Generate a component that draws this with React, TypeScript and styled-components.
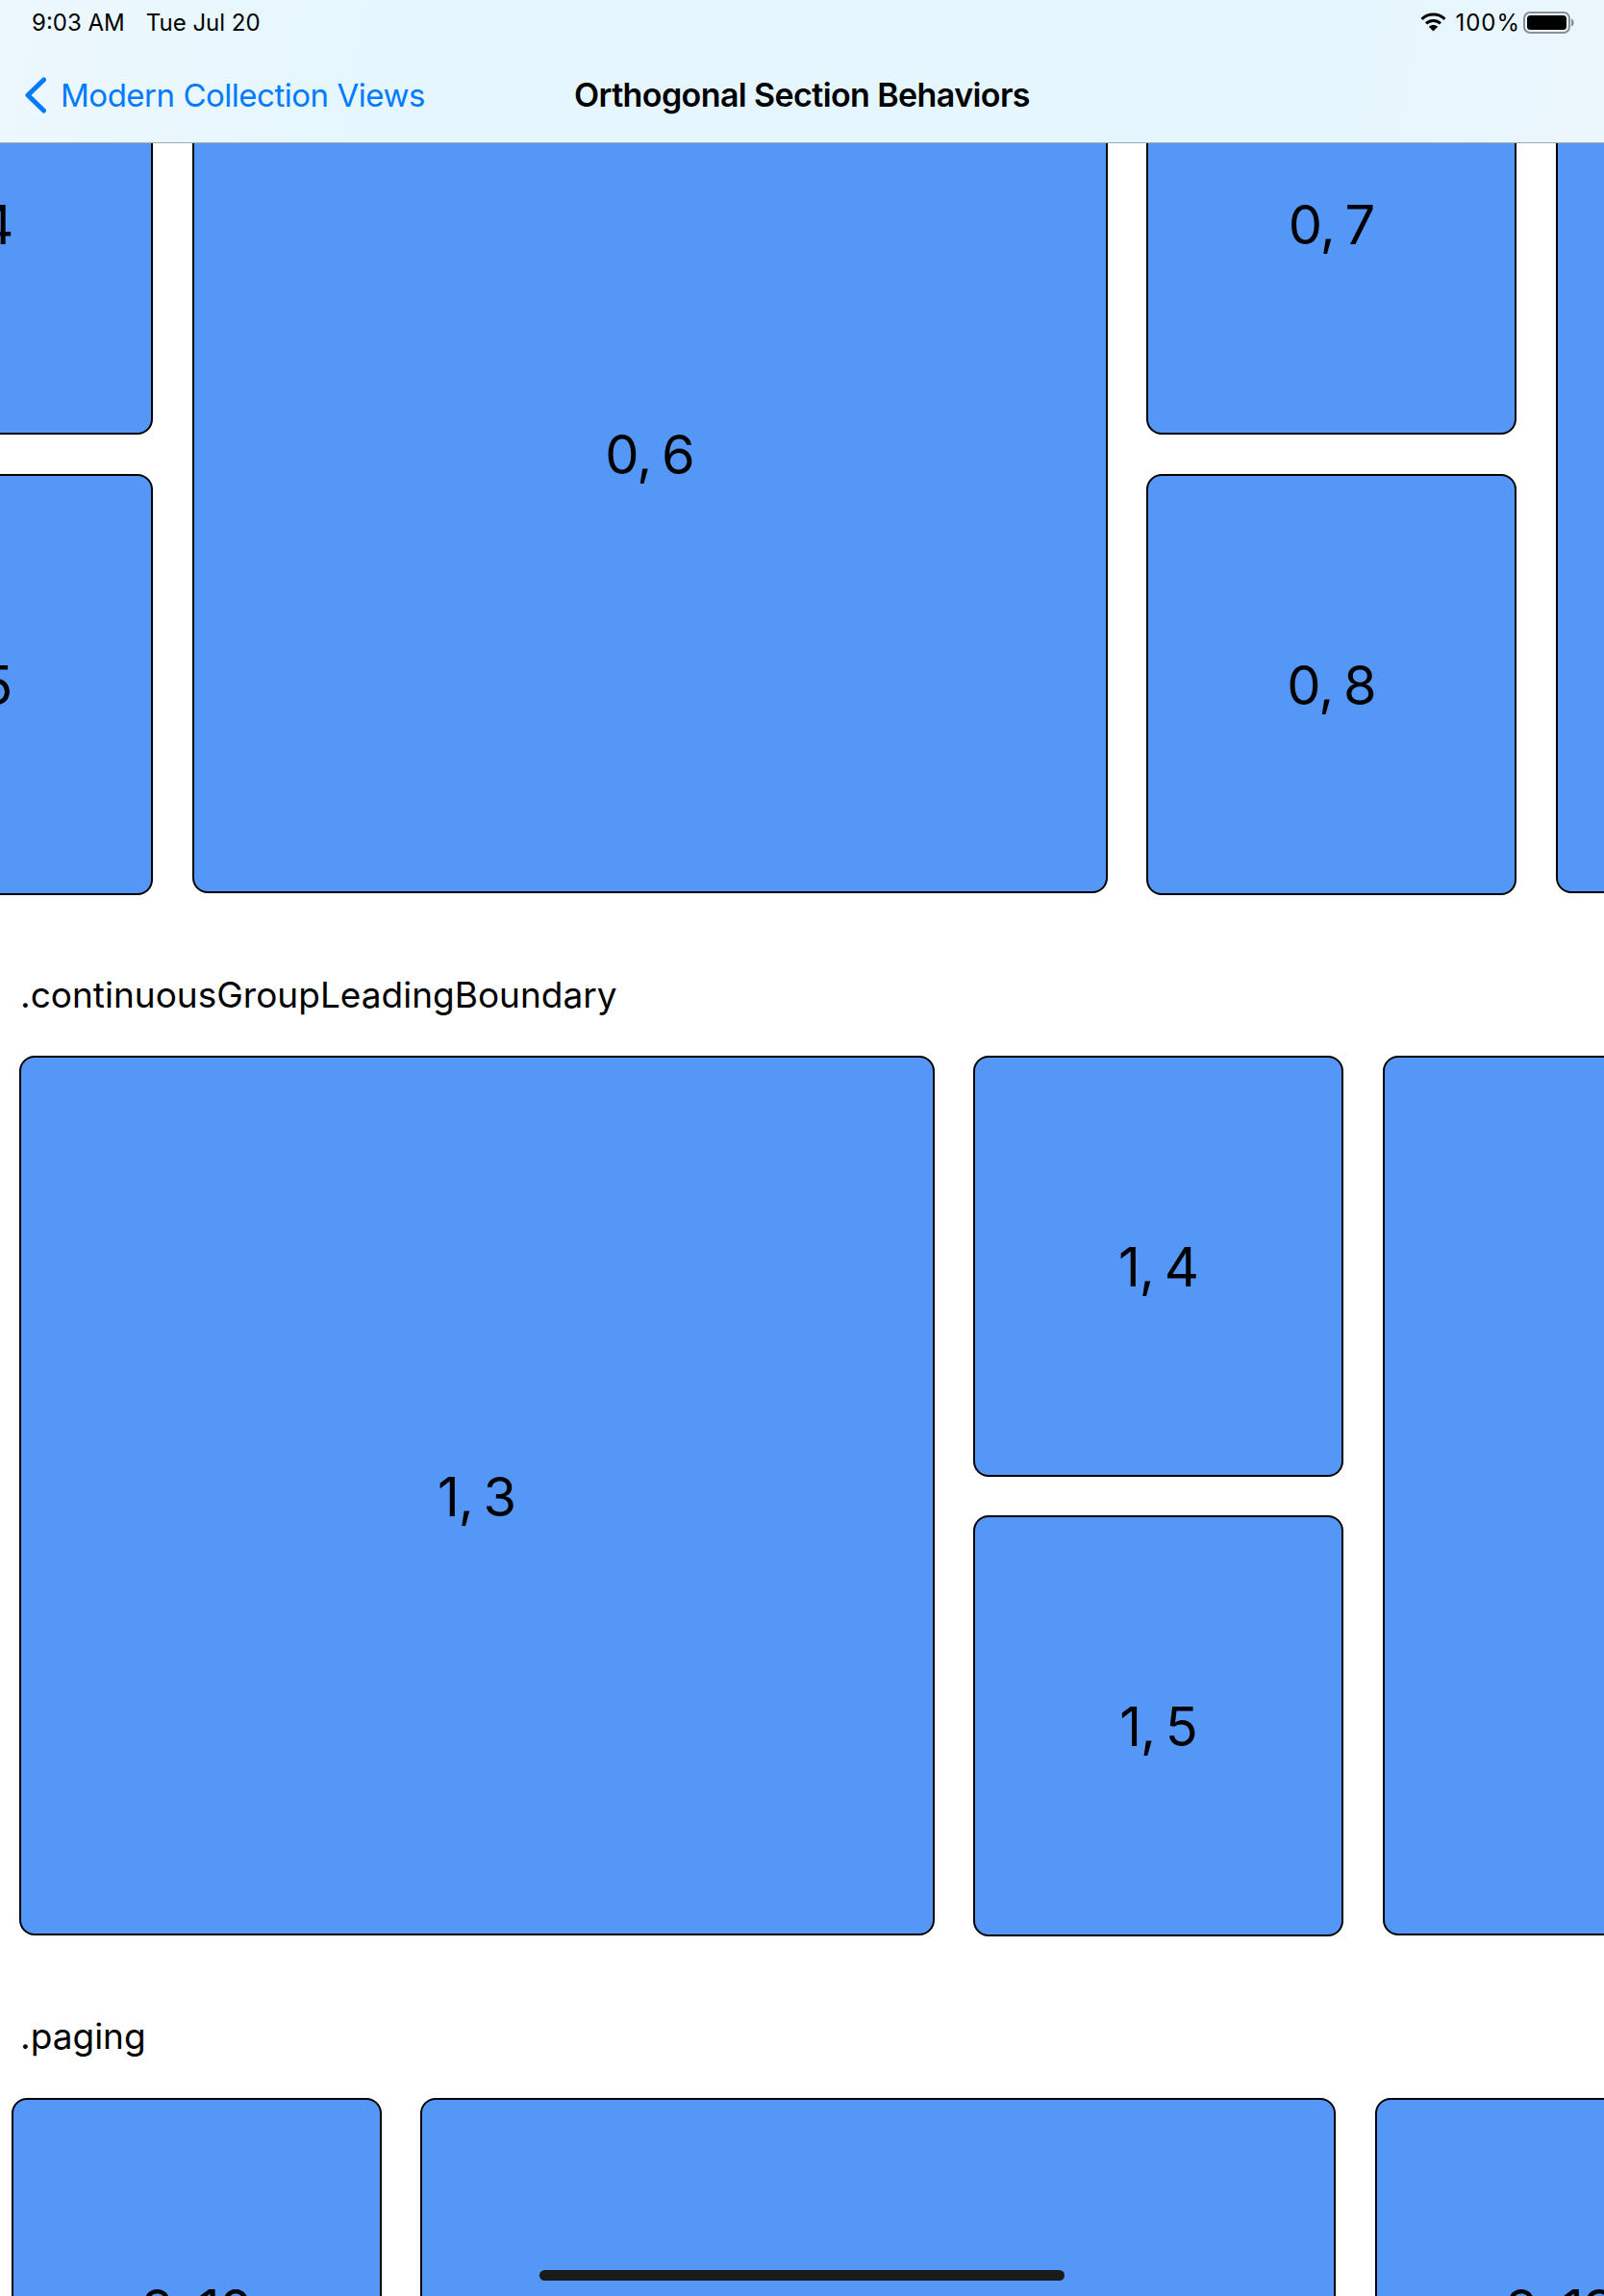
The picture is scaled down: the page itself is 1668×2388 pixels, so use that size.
import * as React from 'react';
import styled, { createGlobalStyle } from 'styled-components';

const GlobalStyle = createGlobalStyle`
  html, body {
    margin: 0;
    padding: 0;
    background: #fff;
    font-family: Inter, "Noto Sans", "Liberation Sans", sans-serif;
  }
`;

const Page = styled.div`
  position: relative;
  width: 1668px;
  height: 2388px;
  overflow: hidden;
  background: #fff;
  color: #000;
`;

const Header = styled.header`
  position: absolute;
  top: 0;
  left: 0;
  right: 0;
  z-index: 2;
  height: 149px;
  box-sizing: border-box;
  border-bottom: 1px solid rgba(0, 0, 0, 0.3);
  background: linear-gradient(100deg, #edf8fd 0%, #e5f6fe 25%, #e5f6fe 80%, #ebf6fc 100%);
`;

const StatusBar = styled.div`
  display: flex;
  justify-content: space-between;
  align-items: center;
  height: 46px;
  padding: 0 31px 0 33px;
  font-size: 24px;
`;

const StatusGroup = styled.div`
  display: flex;
  align-items: center;
  gap: 22px;
`;

const DeviceStatus = styled.div`
  display: flex;
  align-items: center;
  svg:first-child {
    margin-right: 9px;
  }
  svg:last-child {
    margin-left: 3px;
  }
`;

const Percent = styled.span`
  letter-spacing: 1px;
`;

const NavBar = styled.nav`
  display: grid;
  grid-template-columns: 1fr auto 1fr;
  align-items: center;
  height: 102px;
  box-sizing: border-box;
  padding: 3px 26px 0;
  font-size: 33px;
`;

const BackLink = styled.div`
  display: flex;
  align-items: center;
  gap: 15px;
  color: #007aff;
  letter-spacing: -0.48px;
`;

const Title = styled.div`
  font-size: 34px;
  font-weight: 600;
  letter-spacing: -0.6px;
`;

const Sections = styled.main`
  padding-top: 14px;
`;

const Section = styled.section`
  margin-top: 84px;
`;

const Label = styled.div<{ $below: number }>`
  height: 40px;
  line-height: 40px;
  margin: 0 0 ${(props) => props.$below}px 21px;
  font-size: 37px;
  white-space: nowrap;
`;

const Row = styled.div<{ $inset: number }>`
  display: flex;
  gap: 40.5px;
  margin-left: ${(props) => props.$inset}px;
  width: max-content;
`;

const Column = styled.div<{ $gap: number }>`
  display: flex;
  flex-direction: column;
  gap: ${(props) => props.$gap}px;
  width: 385px;
`;

const Tile = styled.div<{ $big?: boolean }>`
  display: flex;
  align-items: center;
  justify-content: center;
  box-sizing: border-box;
  flex: none;
  width: ${(props) => (props.$big ? '952px' : '385px')};
  height: ${(props) => (props.$big ? '915px' : '438px')};
  padding-top: 2px;
  border: 2px solid #000;
  border-radius: 16px;
  background: #5597f6;
  font-size: 56px;
  letter-spacing: -1px;
  word-spacing: -4px;
  white-space: nowrap;
`;

const HomeIndicator = styled.div`
  position: absolute;
  left: 561px;
  bottom: 16px;
  width: 546px;
  height: 11px;
  border-radius: 6px;
  background: #1a1a1a;
`;

const WifiIcon = () => (
  <svg width="27" height="20" viewBox="0 0 27 20" fill="none" stroke="#000" strokeWidth="3">
    <path d="M1.5 6.8C8.2 0.4 18.8 0.4 25.5 6.8" />
    <path d="M6 11.4C10.2 7.4 16.8 7.4 21 11.4" />
    <path d="M13.5 19.5L8.8 14.8C11.4 12.4 15.6 12.4 18.2 14.8Z" fill="#000" stroke="none" />
  </svg>
);

const BatteryIcon = () => (
  <svg width="53" height="23" viewBox="0 0 53 23">
    <rect x="1" y="1" width="47" height="21" rx="6" fill="none" stroke="#8a8f94" strokeWidth="2" />
    <rect x="4" y="4" width="41" height="15" rx="3.5" fill="#000" />
    <path d="M50 7.5C52 8 52.6 10 52.6 11.5C52.6 13 52 15 50 15.5Z" fill="#8a8f94" />
  </svg>
);

const BackChevron = () => (
  <svg width="22" height="38" viewBox="0 0 22 38" fill="none" stroke="#007aff" strokeWidth="5" strokeLinecap="round" strokeLinejoin="round">
    <path d="M19.5 3L3 19L19.5 35" />
  </svg>
);

export default function App() {
  return (
    <Page>
      <GlobalStyle />
      <Header>
        <StatusBar>
          <StatusGroup>
            <span>9:03 AM</span>
            <span>Tue Jul 20</span>
          </StatusGroup>
          <DeviceStatus>
            <WifiIcon />
            <Percent>100%</Percent>
            <BatteryIcon />
          </DeviceStatus>
        </StatusBar>
        <NavBar>
          <BackLink>
            <BackChevron />
            <span>Modern Collection Views</span>
          </BackLink>
          <Title>Orthogonal Section Behaviors</Title>
        </NavBar>
      </Header>
      <Sections>
        <Row $inset={-226}>
          <Column $gap={41}>
            <Tile>0, 4</Tile>
            <Tile>0, 5</Tile>
          </Column>
          <Tile $big>0, 6</Tile>
          <Column $gap={41}>
            <Tile>0, 7</Tile>
            <Tile>0, 8</Tile>
          </Column>
          <Tile $big>0, 9</Tile>
        </Row>
        <Section>
          <Label $below={43}>.continuousGroupLeadingBoundary</Label>
          <Row $inset={19.5}>
            <Tile $big>1, 3</Tile>
            <Column $gap={40}>
              <Tile>1, 4</Tile>
              <Tile>1, 5</Tile>
            </Column>
            <Tile $big>1, 6</Tile>
          </Row>
        </Section>
        <Section>
          <Label $below={44}>.paging</Label>
          <Row $inset={11.7}>
            <Column $gap={40}>
              <Tile>2, 10</Tile>
              <Tile>2, 11</Tile>
            </Column>
            <Tile $big>2, 12</Tile>
            <Column $gap={40}>
              <Tile>2, 13</Tile>
              <Tile>2, 14</Tile>
            </Column>
          </Row>
        </Section>
      </Sections>
      <HomeIndicator />
    </Page>
  );
}
